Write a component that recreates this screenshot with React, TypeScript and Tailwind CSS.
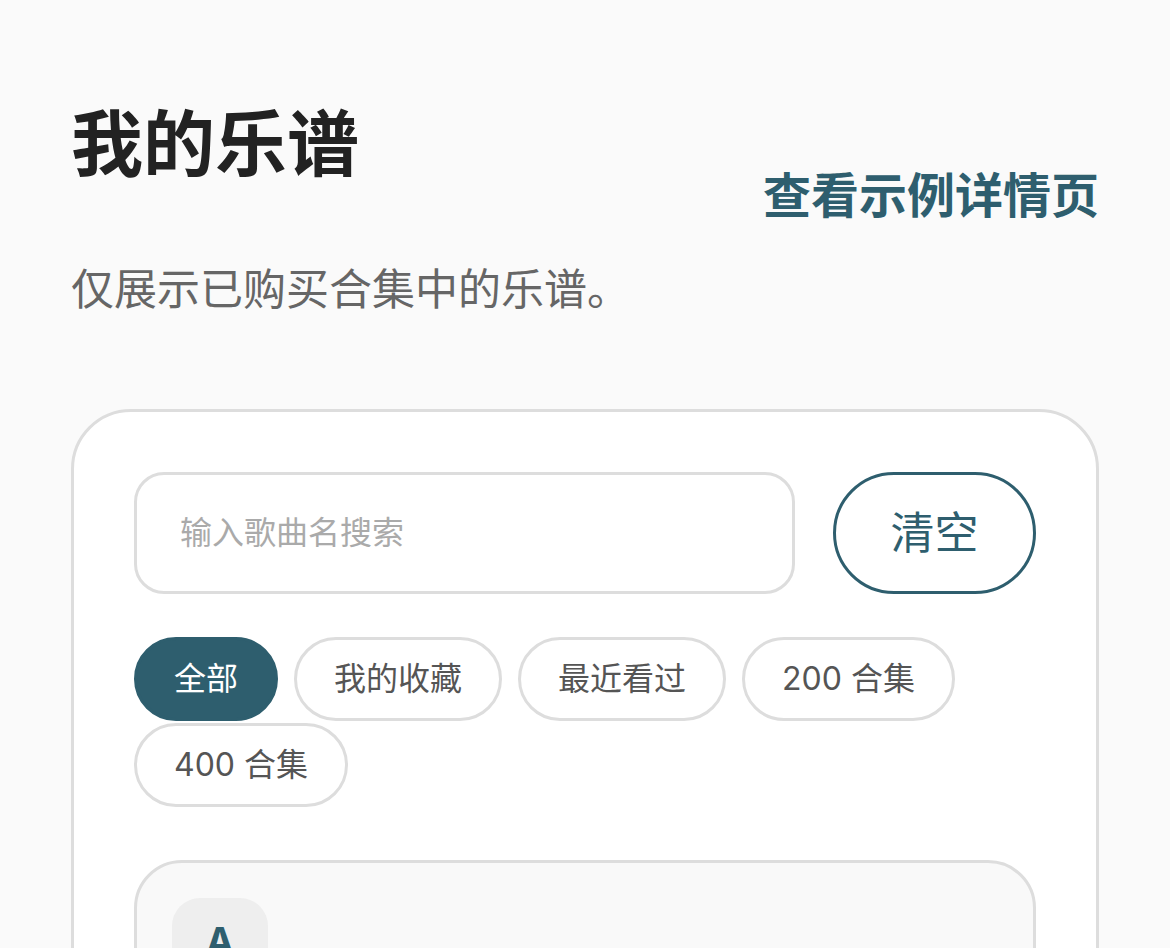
import React from "react";

const chips = ["全部", "我的收藏", "最近看过", "200 合集", "400 合集"];

export default function App() {
  return (
    <div
      className="min-h-[948px] bg-[#fafafa] px-[71px] pt-[96px] overflow-hidden"
      style={{ fontFamily: 'Inter, "Noto Sans CJK SC", sans-serif' }}
    >
      <div className="flex items-start justify-between">
        <h1 className="text-[72px] font-bold leading-[96px] text-[#222222]">我的乐谱</h1>
        <a className="mt-[64px] text-[48px] font-bold leading-[72px] text-[#2e5e6e]">查看示例详情页</a>
      </div>
      <p className="mt-[27px] text-[43px] leading-[60px] text-[#666666]">仅展示已购买合集中的乐谱。</p>

      <div className="mt-[90px] rounded-[60px] border-[3px] border-[#dddddd] bg-white p-[60px] pb-[200px]">
        <div className="flex items-center gap-[38px]">
          <div className="flex h-[122px] flex-1 items-center rounded-[30px] border-[3px] border-[#dddddd] bg-white pl-[43px]">
            <span className="text-[32px] text-[#aaaaaa]">输入歌曲名搜索</span>
          </div>
          <button className="flex h-[122px] w-[203px] items-center justify-center rounded-full border-[3px] border-[#2e5e6e] bg-white text-[44px] text-[#2e5e6e]">
            清空
          </button>
        </div>

        <div className="mt-[43px] flex flex-wrap gap-x-[16px] gap-y-[2px]">
          {chips.map((c, i) => (
            <div
              key={c}
              className={
                i === 0
                  ? "flex h-[84px] items-center justify-center rounded-full border-[3px] border-[#2e5e6e] bg-[#2e5e6e] px-[37px] text-[32px] text-white"
                  : "flex h-[84px] items-center justify-center rounded-full border-[3px] border-[#dddddd] bg-white px-[37px] text-[32px] text-[#555555]"
              }
            >
              {c}
            </div>
          ))}
        </div>

        <div className="mt-[53px] h-[400px] rounded-[48px] border-[3px] border-[#dddddd] bg-[#f9f9f9] px-[35px] pt-[35px]">
          <div className="flex h-[100px] w-[96px] items-start justify-center rounded-[28px] bg-[#eeeeee] pt-[18px]">
            <span className="text-[38px] font-bold leading-[50px] text-[#2e5e6e]">A</span>
          </div>
        </div>
      </div>
    </div>
  );
}
